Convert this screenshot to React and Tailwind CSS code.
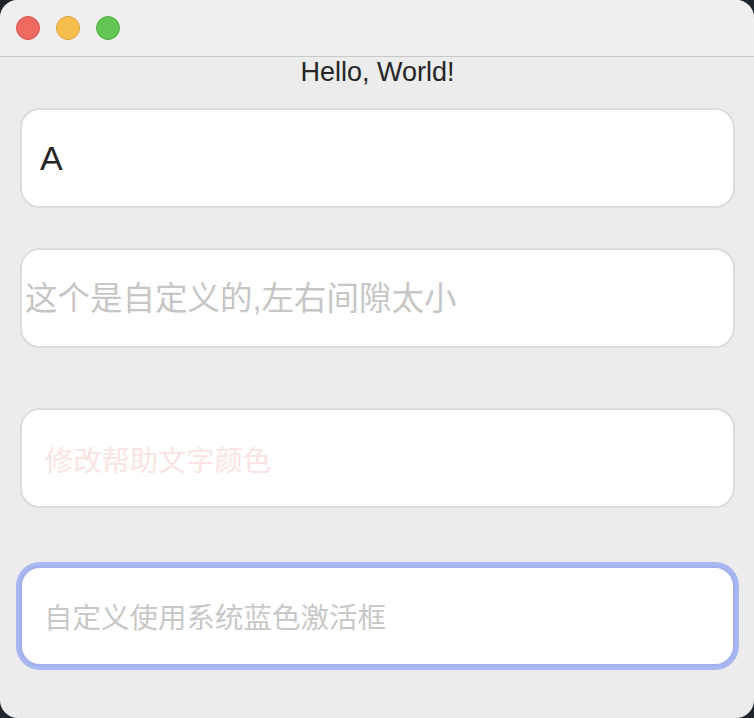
import React from 'react';

const fieldBase =
  'w-full h-[100px] rounded-[20px] border-2 bg-white outline-none text-[#262626] placeholder:opacity-100';

const App = () => {
  return (
    <div className="w-[754px] h-[718px] bg-[#1f262b] font-['Liberation_Sans','Noto_Sans_CJK_SC',sans-serif]">
      <div className="w-full h-full rounded-[18px] overflow-hidden bg-[#ebeceb] flex flex-col">
        {/* title bar */}
        <div className="h-[57px] shrink-0 bg-[#efefef] border-b border-[#c9c9c9] flex items-center gap-4 pl-4">
          <span className="w-6 h-6 rounded-full bg-[#ee6a5f] border border-[#d9534a]" />
          <span className="w-6 h-6 rounded-full bg-[#f6be4f] border border-[#dea23a]" />
          <span className="w-6 h-6 rounded-full bg-[#62c554] border border-[#4fae41]" />
        </div>

        <div className="flex flex-col pl-5 pr-[19px]">
          <div className="h-[30px] text-center text-[27px] leading-[30px] text-[#262626]">
            Hello, World!
          </div>

          <input
            readOnly
            defaultValue="A"
            className={`${fieldBase} mt-[21px] border-[#dcdcdc] pl-[18px] text-[34px]`}
          />

          <input
            readOnly
            placeholder="这个是自定义的,左右间隙太小"
            className={`${fieldBase} mt-[40px] border-[#dcdcdc] pl-[3px] pt-[2px] text-[32.5px] placeholder:text-[#c6c6c6]`}
          />

          <input
            readOnly
            placeholder="修改帮助文字颜色"
            className={`${fieldBase} mt-[60px] border-[#dcdcdc] pl-[23px] pt-[6px] text-[28.25px] placeholder:text-[#fae3e3]`}
          />

          <input
            readOnly
            placeholder="自定义使用系统蓝色激活框"
            className={`${fieldBase} mt-[58px] border-[#9fb0ec] ring-4 ring-[#a8b7f0] pl-[22px] pt-[5px] text-[28.5px] placeholder:text-[#c8c8c8]`}
          />
        </div>
      </div>
    </div>
  );
};

export default App;
